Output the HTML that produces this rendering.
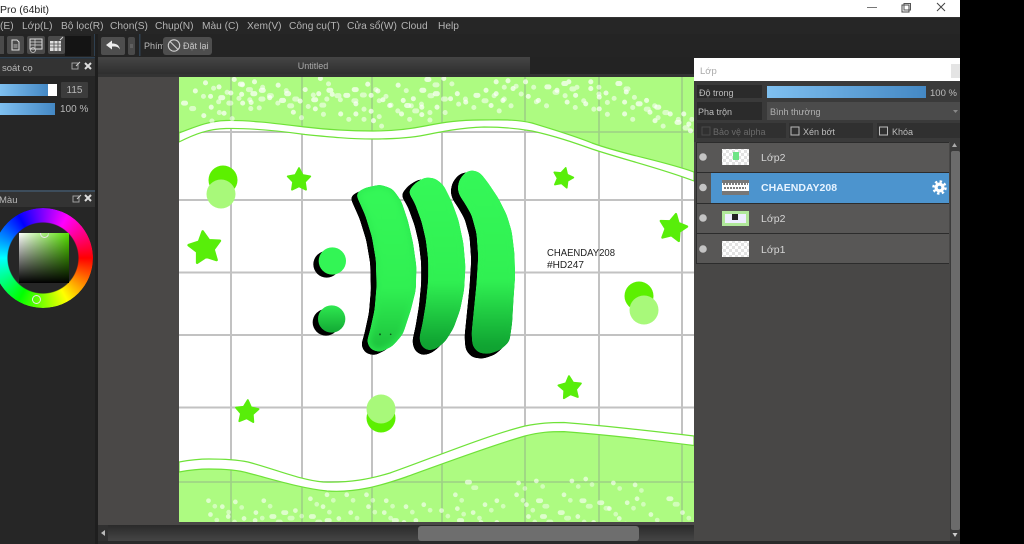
<!DOCTYPE html>
<html>
<head>
<meta charset="utf-8">
<style>
html,body{margin:0;padding:0;background:#000;width:1024px;height:544px;overflow:hidden}
body{position:relative;font-family:"Liberation Sans",sans-serif}
svg{position:absolute;left:0;top:0}
#main{filter:blur(.35px)}
text{font-family:"Liberation Sans",sans-serif}
#wheel{position:absolute;left:-7px;top:208px;width:100px;height:100px;border-radius:50%;
background:conic-gradient(from 90deg,#f00,#ff0,#0f0,#0ff,#00f,#f0f,#f00);
-webkit-mask:radial-gradient(circle,transparent 35px,#000 36px);mask:radial-gradient(circle,transparent 35px,#000 36px)}
#sq{position:absolute;left:19px;top:233px;width:50px;height:50px;
background:linear-gradient(to bottom,rgba(0,0,0,0),#000),linear-gradient(to right,#fff,#55e000)}
.ind{position:absolute;border:1.5px solid #e8e8e8;border-radius:50%;width:7px;height:7px}
</style>
</head>
<body>
<svg id="main" width="1024" height="544" viewBox="0 0 1024 544">
<defs>
<linearGradient id="blob" x1="0" y1="0" x2="0" y2="1"><stop offset="0" stop-color="#35f858"/><stop offset=".6" stop-color="#30f052"/><stop offset=".95" stop-color="#10a532"/><stop offset="1" stop-color="#10a030"/></linearGradient>
<linearGradient id="blob1" x1="0" y1="0" x2="0" y2="1"><stop offset="0" stop-color="#35f858"/><stop offset=".62" stop-color="#30f052"/><stop offset="1" stop-color="#1cc03c"/></linearGradient>
<linearGradient id="circ" x1="0" y1="0" x2="0" y2="1"><stop offset="0" stop-color="#2fe850"/><stop offset="1" stop-color="#12a834"/></linearGradient>
<linearGradient id="bar" x1="0" y1="0" x2="1" y2="0"><stop offset="0" stop-color="#7fc0f0"/><stop offset="1" stop-color="#4488c4"/></linearGradient>
<linearGradient id="tab" x1="0" y1="0" x2="0" y2="1"><stop offset="0" stop-color="#454545"/><stop offset="1" stop-color="#2e2e2e"/></linearGradient>
<linearGradient id="sb" x1="0" y1="0" x2="0" y2="1"><stop offset="0" stop-color="#2a2a2a"/><stop offset="1" stop-color="#454545"/></linearGradient>
<pattern id="chk" width="6" height="6" patternUnits="userSpaceOnUse"><rect width="6" height="6" fill="#fff"/><rect width="3" height="3" fill="#e2e2e2"/><rect x="3" y="3" width="3" height="3" fill="#e2e2e2"/></pattern>
<polygon id="star" points="0,-9.500 2.900,-4 9,-2.900 4.700,1.500 5.600,7.700 0,5 -5.600,7.700 -4.700,1.500 -9,-2.900 -2.900,-4" fill="#58ee0a" stroke="#58ee0a" stroke-width="1.500" stroke-linejoin="round"/>
<clipPath id="cv"><rect x="179" y="77" width="515" height="445"/></clipPath>
<clipPath id="bands">
<path d="M179 133C195 127 208 121 226 120.500C250 120 280 124 305 127C330 130 350 131 373 131C395 131 410 129 425 126C445 122 460 120 480 120C500 120 515 119 532 123C555 130 575 136 592 143C625 155 660 160 694 172V77H179Z"/>
<path d="M179 472C190 470 200 469 209 469C225 469 238 470 248 473C275 480 300 488 327 491C355 493 380 486 406 477C445 463 490 446 525 436C540 432 550 431.600 564 431.600C610 435 650 440 694 445.500V522H179Z"/>
</clipPath>
<filter id="round" x="-10%" y="-10%" width="120%" height="120%" color-interpolation-filters="sRGB">
<feGaussianBlur stdDeviation="9"/>
<feColorMatrix type="matrix" values="1 0 0 0 0  0 1 0 0 0  0 0 1 0 0  0 0 0 24 -11"/>
</filter>
<path id="dt" d="M40 98h6M75 62h0M105 38h0M100 135h0M122 110h0M120 78h0M145 50h0M150 82h6M160 128h0M180 68h0M190 28h0M208 42h6M212 72h0M215 98h0M240 96h0M250 35h0M245 70h6M270 60h6M295 82h0M320 45h0M330 90h6M345 70h6M365 125h0M385 92h0M400 58h0M425 88h6M430 115h0M440 70h0M445 25h0M470 60h6M480 72h0M505 130h0M520 75h6M545 58h6M550 100h0M550 130h0M585 42h0M595 75h0M595 122h0M602 150h0M615 62h0M630 88h0M650 105h0M675 45h0M685 130h0M690 90h0M700 105h6M720 85h0M745 60h6M745 110h0M745 132h0M760 28h6M785 70h6M790 110h0M810 25h0M830 85h0M850 70h0M875 95h0M905 75h6M935 60h0M950 105h0M965 35h0M965 70h0M985 90h0M1000 32h0M1015 55h0M1052 35h0M1060 78h0M1090 90h0M1115 50h6M1145 60h0M1165 40h6M1180 35h0M1175 95h0M1200 75h0M1230 100h0M1245 35h0M1245 55h0M1270 80h0M1270 115h0M1290 68h0M1325 40h6M1350 65h0M1345 95h0M1345 130h0M1385 100h6M1410 90h0M1420 125h0M1440 110h6M1435 150h0M1480 130h0M1500 155h6M1520 130h0M1535 160h0M1540 180h0"/>
<path id="db" d="M300 255h0M305 290h0M300 325h0M322 345h0M335 270h0M350 295h0M368 258h0M375 320h0M345 335h0M390 300h0M420 285h0M418 305h0M440 255h0M430 335h0M410 345h0M460 295h6M490 285h6M520 280h0M525 325h0M558 250h0M560 295h6M560 328h0M590 270h0M600 305h6M600 240h0M600 352h6M630 300h0M650 240h0M660 285h0M665 320h0M665 345h0M700 240h0M705 270h0M715 325h0M710 345h0M750 255h0M745 285h0M750 325h0M770 305h6M800 270h0M795 310h0M825 305h0M845 265h0M850 340h0M890 280h0M890 325h6M925 240h0M930 275h0M935 305h6M935 330h0M955 208h6M970 285h0M990 310h0M1000 265h0M1030 255h0M1030 310h0M1075 315h0M1085 210h0M1080 240h0M1105 265h0M1110 295h0M1130 205h0M1135 255h6M1145 295h6M1190 285h6M1200 240h0M1200 320h0M1220 205h0M1235 295h0M1245 255h6M1255 200h0M1275 310h0M1290 260h6M1315 275h0M1325 210h0M1340 300h0M1360 260h0M1380 215h0M1385 250h0M1420 290h0M1460 320h0M1465 250h6M1500 285h0M1510 320h0"/>
<polygon id="s1" points="172,102 195,88 240,78 275,90 300,125 320,185 335,250 345,320 343,390 328,450 305,520 275,555 240,572 215,565 205,545 215,510 228,450 234,380 232,300 220,230 200,165"/>
<polygon id="s2" points="325,95 345,70 375,52 405,55 430,75 455,125 475,180 490,250 496,320 492,390 480,450 460,505 435,545 410,565 385,572 365,560 358,535 368,490 378,430 385,360 385,300 378,240 365,185 345,130"/>
<polygon id="s3" points="478,60 495,38 515,30 540,38 565,70 595,115 620,165 635,215 643,280 645,350 640,420 636,490 628,545 600,570 565,582 535,578 518,558 515,520 522,450 530,370 535,290 530,220 515,165 495,130 478,105 473,85"/>
</defs>

<!-- window base -->
<rect width="960" height="544" fill="#262626"/>
<rect width="960" height="17" fill="#fff"/>
<rect y="17" width="960" height="1" fill="#333"/>
<text x="0" y="13" font-size="10.500" fill="#222">Pro (64bit)</text>
<path d="M867 7.500h10" stroke="#777" stroke-width="1"/>
<rect x="902" y="5" width="7" height="7" fill="none" stroke="#444"/><rect x="904" y="3.500" width="6.500" height="6.500" fill="none" stroke="#555"/>
<path d="M937 3l8 8M945 3l-8 8" stroke="#444" stroke-width="1"/>

<!-- menu -->
<g font-size="10.200" fill="#b4b4b4">
<text x="0" y="29">(E)</text><text x="22" y="29">Lớp(L)</text><text x="61" y="29">Bộ lọc(R)</text><text x="110" y="29">Chọn(S)</text><text x="155" y="29">Chụp(N)</text><text x="202" y="29">Màu (C)</text><text x="247" y="29">Xem(V)</text><text x="289" y="29">Công cụ(T)</text><text x="347" y="29">Cửa sổ(W)</text><text x="401" y="29">Cloud</text><text x="438" y="29">Help</text>
</g>

<!-- toolbar -->
<rect x="0" y="34" width="960" height="24" fill="#242424"/>
<rect x="0" y="36" width="4" height="18" fill="#4a4a4a"/>
<rect x="7" y="36" width="17" height="18" rx="2" fill="#4a4a4a"/>
<path d="M12 40h5l2 2v8h-7z" fill="none" stroke="#ddd" stroke-width="1"/><path d="M13.500 45h4M13.500 47h4" stroke="#ddd" stroke-width=".8"/>
<rect x="27" y="36" width="18" height="18" rx="2" fill="#4a4a4a"/>
<rect x="30" y="39" width="12" height="10" fill="none" stroke="#ddd" stroke-width="1"/><path d="M30 42h12M30 45h12M35 39v10" stroke="#ddd" stroke-width=".7"/><circle cx="33" cy="50" r="2.500" fill="none" stroke="#ccc" stroke-width=".8"/>
<rect x="48" y="36" width="17" height="18" rx="2" fill="#4a4a4a"/>
<rect x="50" y="41" width="11" height="10" fill="#ddd"/><path d="M50 44h11M50 47h11M54 41v10M58 41v10" stroke="#4a4a4a" stroke-width=".8"/><path d="M60 40l3-3" stroke="#ccc"/>
<rect x="65" y="36" width="26" height="20" fill="#141414"/>
<rect x="94" y="34" width="1.500" height="22" fill="#2f4050"/>
<rect x="101" y="37" width="24" height="18" rx="2" fill="#4e4e4e"/>
<path d="M106 45l6-4.500v3c4 0 7 1 8 6-2-3-4-3-8-3v3z" fill="#eee"/>
<rect x="128" y="37" width="7" height="18" rx="2" fill="#4a4a4a"/><path d="M130 45h3M130 47h3" stroke="#777"/>
<rect x="139" y="34" width="1.500" height="22" fill="#2f4050"/>
<text x="144" y="49" font-size="9" fill="#bbb">Phím</text>
<rect x="163" y="37" width="49" height="18" rx="3" fill="#4e4e4e"/>
<circle cx="174" cy="45.500" r="5.700" fill="none" stroke="#d0d0d0" stroke-width="1.100"/><path d="M170 41.500l8 8" stroke="#d0d0d0" stroke-width="1.100"/>
<text x="183" y="49" font-size="9" fill="#c8c8c8">Đặt lại</text>

<!-- left column -->
<rect x="0" y="57" width="95" height="1.500" fill="#2f4050"/>
<rect x="0" y="59" width="95" height="17" fill="#333"/>
<text x="2" y="71" font-size="9.500" fill="#b8b8b8">soát cọ</text>
<rect x="72" y="63" width="6" height="6" fill="none" stroke="#aaa" stroke-width=".9"/><path d="M76 66l4-4" stroke="#ccc"/>
<path d="M85 63l6 6M91 63l-6 6" stroke="#ddd" stroke-width="2"/>
<rect x="0" y="84" width="48" height="12" fill="url(#bar)"/>
<rect x="48" y="84" width="9" height="12" fill="#fff"/>
<rect x="61" y="82" width="27" height="16" rx="1" fill="#3c3c3c"/>
<text x="74.500" y="93" font-size="10" fill="#b8b8b8" text-anchor="middle">115</text>
<rect x="0" y="103" width="55" height="12" fill="url(#bar)"/>
<text x="60" y="112" font-size="10" fill="#b8b8b8">100 %</text>
<rect x="0" y="190" width="95" height="2" fill="#3d4d5c"/>
<rect x="0" y="192" width="95" height="15" fill="#333"/>
<text x="-1" y="203" font-size="9.500" fill="#b8b8b8">Màu</text>
<rect x="73" y="196" width="6" height="6" fill="none" stroke="#aaa" stroke-width=".9"/><path d="M77 199l4-4" stroke="#ccc"/>
<path d="M85 195l6 6M91 195l-6 6" stroke="#ddd" stroke-width="2"/>
<rect x="95" y="34" width="3" height="510" fill="#1e1e1e"/>

<!-- canvas area -->
<rect x="98" y="57" width="596" height="487" fill="#4a4847"/>
<rect x="98" y="57" width="432" height="17" fill="url(#tab)"/>
<rect x="530" y="57" width="164" height="17" fill="#232323"/>
<rect x="98" y="74" width="596" height="3" fill="#333"/>
<text x="313" y="69" font-size="9" fill="#aaa" text-anchor="middle">Untitled</text>

<g clip-path="url(#cv)">
<rect x="179" y="77" width="515" height="445" fill="#fff"/>
<g stroke="#c2c2c2" stroke-width="2" fill="none">
<path d="M231 77V522M302 77V522M372 77V522M442 77V522M525 77V522M599 77V522M682 77V522"/>
<path d="M179 132H694M179 200H694M179 272.500H694M179 335H694M179 407.500H694M179 482H694"/>
</g>
<g clip-path="url(#bands)">
<rect x="179" y="77" width="515" height="445" fill="#adfb81"/>
<g stroke="#9dcf85" stroke-width="1.600" fill="none">
<path d="M231 77V522M302 77V522M372 77V522M442 77V522M525 77V522M599 77V522M682 77V522"/>
<path d="M179 132H694M179 482H694"/>
</g>
</g>
<!-- strips -->
<path d="M179 133C195 127 208 121 226 120.500C250 120 280 124 305 127C330 130 350 131 373 131C395 131 410 129 425 126C445 122 460 120 480 120C500 120 515 119 532 123C555 130 575 136 592 143C625 155 660 160 694 172V181C660 168 625 160 592 149C575 143 555 136 532 131C515 128 500 127 484 127C460 128 445 131 425 135C410 138 395 139 373 139C350 139 330 137 305 134.500C280 131 250 128 226 128.500C208 129 195 134 179 142Z" fill="#fff" stroke="#6fe238" stroke-width="1.200"/>
<path d="M179 462C190 460 200 459 209 459C225 459 238 460 248 462C275 469 300 480 323 482C350 483 370 479 390 473C430 459 485 436 525 426C540 423 550 422.500 564 422.500C610 426 650 431 694 436V445.500C650 440 610 435 564 431.600C550 431.600 540 432 525 436C490 446 445 463 406 477C380 486 355 493 327 491C300 488 275 480 248 473C238 470 225 469 209 469C200 469 190 470 179 472Z" fill="#fff" stroke="#6fe238" stroke-width="1.200"/>

<!-- sparkles top -->
<g transform="translate(170,70) scale(.338)" fill="none" stroke="#fff" stroke-width="15" stroke-linecap="round">
<use href="#dt" stroke-opacity=".7"/>
<use href="#dt" stroke-opacity=".55" transform="translate(24,16)"/>
</g>
<!-- sparkles bottom -->
<g transform="translate(90,400) scale(.395)" fill="none" stroke="#fff" stroke-width="12" stroke-linecap="round">
<use href="#db" stroke-opacity=".6"/>
<use href="#db" stroke-opacity=".45" transform="translate(16,14)"/>
</g>

<!-- stars -->
<use href="#star" transform="translate(299,180) scale(1.250)"/>
<use href="#star" transform="translate(563,178) rotate(15) scale(1.100)"/>
<use href="#star" transform="translate(205,248) rotate(-8) scale(1.750)"/>
<use href="#star" transform="translate(673,228) rotate(12) scale(1.500)"/>
<use href="#star" transform="translate(247,412) rotate(4) scale(1.250)"/>
<use href="#star" transform="translate(570,388) rotate(-5) scale(1.250)"/>

<!-- circle pairs -->
<circle cx="223" cy="180" r="14.500" fill="#5cf000"/><circle cx="221" cy="194" r="14.500" fill="#a8f97a"/>
<circle cx="639" cy="296" r="14.500" fill="#5cf000"/><circle cx="644" cy="310" r="14.500" fill="#a8f97a"/>
<circle cx="381" cy="418" r="14.500" fill="#5cf000"/><circle cx="381" cy="409" r="14.500" fill="#a8f97a"/>

<!-- main blobs -->
<g transform="translate(300,160) scale(.33333)" stroke-linejoin="round">
<g filter="url(#round)"><g fill="#000" stroke="#000" stroke-width="8" transform="translate(-17,10)"><use href="#s1"/></g></g>
<g filter="url(#round)"><use href="#s1" fill="url(#blob1)" stroke="#2cea50" stroke-width="8"/></g>
<g filter="url(#round)"><g fill="#000" stroke="#000" stroke-width="8" transform="translate(-17,10)"><use href="#s2"/></g></g>
<g filter="url(#round)"><use href="#s2" fill="url(#blob)"/></g>
<g filter="url(#round)"><g fill="#000" stroke="#000" stroke-width="8" transform="translate(-17,10)"><use href="#s3"/></g></g>
<g filter="url(#round)"><use href="#s3" fill="url(#blob)"/></g>
<g fill="#000" transform="translate(-17,10)">
<circle cx="97" cy="303" r="40"/><circle cx="95" cy="477" r="40"/>
</g>
<circle cx="97" cy="303" r="41" fill="#33f555"/>
<circle cx="95" cy="477" r="41" fill="url(#circ)"/>
<circle cx="240" cy="523" r="3" fill="#0a5a1c"/><circle cx="272" cy="523" r="2.500" fill="#0a5a1c"/>
</g>

<text x="547" y="256" font-size="10.500" fill="#222" textLength="68" lengthAdjust="spacingAndGlyphs">CHAENDAY208</text>
<text x="547" y="268" font-size="10.500" fill="#222" textLength="37" lengthAdjust="spacingAndGlyphs">#HD247</text>
</g>

<!-- horizontal scrollbar -->
<rect x="98" y="525" width="596" height="16" fill="url(#sb)"/>
<rect x="98" y="525" width="10" height="16" fill="#303030"/>
<path d="M105 530v6l-4-3z" fill="#bbb"/>
<rect x="418" y="526" width="221" height="15" rx="3" fill="#6e6e6e"/>
<rect x="98" y="541" width="596" height="3" fill="#2a2a2a"/>

<!-- layer panel -->
<rect x="694" y="58" width="266" height="486" fill="#484746"/>
<rect x="694" y="58" width="266" height="23" fill="#fff"/>
<rect x="951" y="64" width="9" height="14" fill="#e4e4e4"/>
<text x="700" y="74" font-size="9.500" fill="#aaa">Lớp</text>
<rect x="694" y="81" width="266" height="61" fill="#3a3a3a"/>
<rect x="697" y="85" width="65" height="13" fill="#2b2b2b"/>
<text x="699" y="96" font-size="9" fill="#bdbdbd">Độ trong</text>
<rect x="767" y="86" width="159" height="12" fill="url(#bar)"/>
<text x="930" y="96" font-size="9.500" fill="#bdbdbd">100 %</text>
<rect x="697" y="102" width="65" height="18" fill="#2b2b2b"/>
<text x="698" y="115" font-size="9" fill="#bdbdbd">Pha trộn</text>
<rect x="767" y="102" width="193" height="18" fill="#4b4b4b"/>
<text x="770" y="115" font-size="9" fill="#b0b0b0">Bình thường</text>
<path d="M953 110h5l-2.500 3z" fill="#888"/>
<rect x="697" y="123" width="89" height="15" fill="#303030"/>
<rect x="789" y="123" width="84" height="15" fill="#303030"/>
<rect x="877" y="123" width="83" height="15" fill="#303030"/>
<rect x="702" y="127" width="8" height="8" fill="none" stroke="#4a4a4a"/>
<text x="713" y="135" font-size="9" fill="#6a6a6a">Bảo vệ alpha</text>
<rect x="791" y="127" width="8" height="8" fill="none" stroke="#bbb"/>
<text x="803" y="135" font-size="9" fill="#bdbdbd">Xén bớt</text>
<rect x="879.500" y="127" width="8" height="8" fill="none" stroke="#bbb"/>
<text x="892" y="135" font-size="9" fill="#bdbdbd">Khóa</text>

<!-- rows -->
<rect x="696" y="142" width="253" height="122" fill="#2c2c2c"/>
<rect x="697" y="143" width="252" height="29" fill="#585756"/>
<rect x="697" y="173" width="252" height="30" fill="#585756"/>
<rect x="711" y="173" width="238" height="30" fill="#4c94ce"/>
<rect x="697" y="204" width="252" height="29" fill="#585756"/>
<rect x="697" y="234" width="252" height="29" fill="#585756"/>
<g fill="#c4c4c4">
<circle cx="703" cy="157" r="3.800"/><circle cx="703" cy="187.500" r="3.800"/><circle cx="703" cy="218" r="3.800"/><circle cx="703" cy="249" r="3.800"/>
</g>
<rect x="722" y="149" width="27" height="16" fill="url(#chk)"/>
<rect x="733" y="152" width="6" height="8" fill="#6fe486"/>
<rect x="722" y="180" width="27" height="15" fill="#777"/>
<rect x="722" y="183" width="27" height="8" fill="#fff"/>
<path d="M723 184h25M724 188h22" stroke="#333" stroke-width="1.300" stroke-dasharray="2 1"/>
<rect x="722" y="211" width="27" height="15" fill="#b0e89a"/>
<rect x="725" y="214" width="21" height="9" fill="#eef"/>
<rect x="732" y="214" width="6" height="6" fill="#222"/>
<rect x="722" y="241" width="27" height="16" fill="url(#chk)"/>
<g font-size="10.500" fill="#d4d4d4">
<text x="761" y="161">Lớp2</text><text x="761" y="222">Lớp2</text><text x="761" y="253">Lớp1</text>
</g>
<text x="761" y="191" font-size="10.500" font-weight="bold" fill="#e6f3ff">CHAENDAY208</text>
<circle cx="939.500" cy="187.500" r="5" fill="#fff"/>
<circle cx="939.500" cy="187.500" r="6" fill="none" stroke="#fff" stroke-width="2.500" stroke-dasharray="2.400 2.300"/>
<circle cx="939.500" cy="187.500" r="1.800" fill="#4c94ce"/>

<!-- panel scrollbar -->
<rect x="950" y="142" width="10" height="402" fill="#3a3a3a"/>
<path d="M954.500 143l-2.500 4h5z" fill="#aaa"/>
<rect x="951" y="151" width="9" height="379" rx="2" fill="#6b6b6b"/>
<path d="M955 537l-2.500-4h5z" fill="#ccc"/>
<rect x="694" y="541" width="266" height="3" fill="#2a2a2a"/>
</svg>

<div id="wheel"></div>
<div id="sq"></div>
<div class="ind" style="left:39.500px;top:229px;clip-path:inset(4px 0 0 0)"></div>
<div class="ind" style="left:32px;top:295px"></div>
</body>
</html>
